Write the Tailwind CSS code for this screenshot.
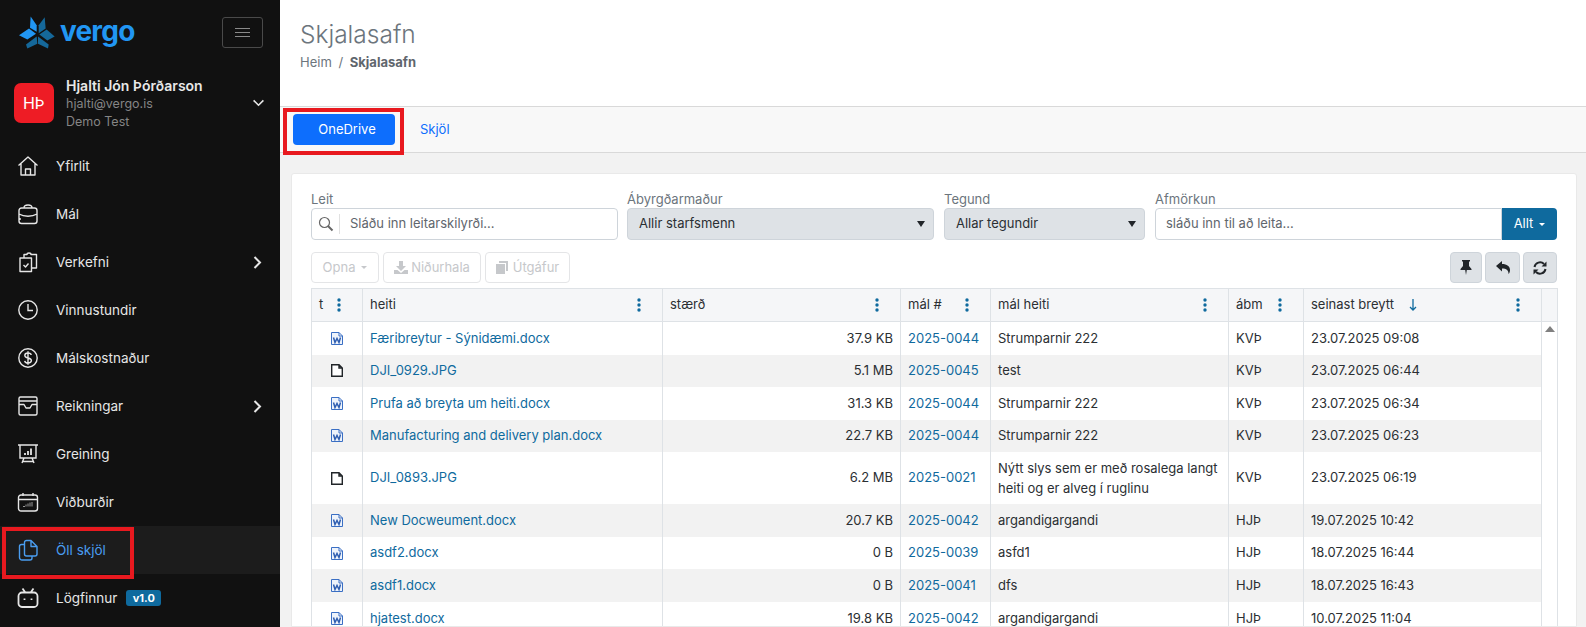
<!DOCTYPE html>
<html lang="is">
<head>
<meta charset="utf-8">
<title>Skjalasafn</title>
<script src="https://cdn.jsdelivr.net/npm/@tailwindcss/browser@4"></script>
</head>
<body class="font-['Inter',sans-serif] text-[13px] text-[#2b2f33] h-[627px] w-[1586px] overflow-hidden bg-[#f2f2f2]">
<div class="flex h-[627px] relative">
  <!-- Sidebar -->
  <aside class="w-[280px] shrink-0 bg-[#111111] text-[#e6e6e6] flex flex-col">
    <div class="h-[64px] flex items-center justify-between pl-[18px] pr-[17px]">
      <div class="flex items-center gap-[4px]">
        <svg width="38" height="35" viewBox="12 12 114 104">
          <path d="M50 16 L68 42 V62 L48 50 Z" fill="#2196f3"/>
          <path d="M15 72 L45 52 L66 68 L40 85 Z" fill="#2196f3"/>
          <path d="M92 18 L74 42 V66 L95 52 Z" fill="#15689a"/>
          <path d="M122 76 L98 55 L76 70 L100 88 Z" fill="#15689a"/>
          <path d="M36 100 L68 76 L70 98 L40 112 Z" fill="#15689a"/>
          <path d="M104 100 L72 76 V98 L102 112 Z" fill="#15689a"/>
        </svg>
        <span class="text-[28px] leading-none font-bold text-[#2196f3] tracking-[-0.8px] pb-[2px]">vergo</span>
      </div>
      <button class="w-[41px] h-[31px] border border-[#4a4a4a] rounded-[3px] flex flex-col items-center justify-center gap-[3px]">
        <span class="block w-[15px] h-[1px] bg-[#8a8a8a]"></span>
        <span class="block w-[15px] h-[1px] bg-[#8a8a8a]"></span>
        <span class="block w-[15px] h-[1px] bg-[#8a8a8a]"></span>
      </button>
    </div>
    <div class="h-[78px] flex items-center pl-[14px] pr-[15px]">
      <div class="w-[40px] h-[40px] rounded-[7px] bg-[#ee1c25] text-white text-[16px] flex items-center justify-center">HÞ</div>
      <div class="ml-[12px] flex-1 leading-[18px]">
        <div class="text-[14px] leading-[19px] font-semibold text-[#e8e8e8]">Hjalti Jón Þórðarson</div>
        <div class="text-[12.5px] text-[#858585]">hjalti@vergo.is</div>
        <div class="text-[12.5px] text-[#858585]">Demo Test</div>
      </div>
      <svg width="13" height="8" viewBox="0 0 14 9" fill="none" stroke="#e6e6e6" stroke-width="1.8"><path d="M1.5 1.5 L7 7 L12.5 1.5"/></svg>
    </div>
    <nav class="flex flex-col text-[13.5px]">
      <a class="h-[48px] flex items-center pl-[17px] pr-[18px]">
        <svg class="w-[22px] h-[22px]" viewBox="0 0 22 22" fill="none" stroke="#e6e6e6" stroke-width="1.4" stroke-linejoin="round"><path d="M1.5 10.5 L11 2 L20.5 10.5 M4 8.5 V20 H18 V8.5 M8.5 20 V14 H13.5 V20"/></svg>
        <span class="ml-[17px]">Yfirlit</span>
      </a>
      <a class="h-[48px] flex items-center pl-[17px] pr-[18px]">
        <svg class="w-[22px] h-[22px]" viewBox="0 0 22 22" fill="none" stroke="#e6e6e6" stroke-width="1.4" stroke-linejoin="round"><path d="M7 5 C7 2.5 8 2 11 2 C14 2 15 2.5 15 5 M4.5 5 H17.5 A2.5 2.5 0 0 1 20 7.5 V18 A2.5 2.5 0 0 1 17.5 20.5 H4.5 A2.5 2.5 0 0 1 2 18 V7.5 A2.5 2.5 0 0 1 4.5 5 Z M2 11 C7 14 15 14 20 11 M3 15 V17 M11 12.5 V13.5"/></svg>
        <span class="ml-[17px]">Mál</span>
      </a>
      <a class="h-[48px] flex items-center pl-[17px] pr-[18px]">
        <svg class="w-[22px] h-[22px]" viewBox="0 0 22 22" fill="none" stroke="#e6e6e6" stroke-width="1.4" stroke-linejoin="round"><path d="M3 7 H14.5 V20.5 H3 Z M7 7 V3.5 H10 C10 1.5 14 1.5 14 3.5 H19.5 V17 H14.5 M6.5 14 L8.5 16 L11.5 12.5"/></svg>
        <span class="ml-[17px] flex-1">Verkefni</span>
        <svg width="9" height="13" viewBox="0 0 9 13" fill="none" stroke="#e6e6e6" stroke-width="2"><path d="M1.5 1 L7 6.5 L1.5 12"/></svg>
      </a>
      <a class="h-[48px] flex items-center pl-[17px] pr-[18px]">
        <svg class="w-[22px] h-[22px]" viewBox="0 0 22 22" fill="none" stroke="#e6e6e6" stroke-width="1.4"><circle cx="11" cy="11" r="9.2"/><path d="M11 5 V11.5 H16"/></svg>
        <span class="ml-[17px]">Vinnustundir</span>
      </a>
      <a class="h-[48px] flex items-center pl-[17px] pr-[18px]">
        <svg class="w-[22px] h-[22px]" viewBox="0 0 22 22" fill="none" stroke="#e6e6e6" stroke-width="1.4"><circle cx="11" cy="11" r="9.2"/><path d="M14.2 8 C14 6.5 12.5 6 11 6 C9 6 7.8 7 7.8 8.4 C7.8 12 14.4 10 14.4 13.6 C14.4 15 13 16 11 16 C9.2 16 7.9 15.2 7.7 13.8 M11 4.2 V17.8"/></svg>
        <span class="ml-[17px]">Málskostnaður</span>
      </a>
      <a class="h-[48px] flex items-center pl-[17px] pr-[18px]">
        <svg class="w-[22px] h-[22px]" viewBox="0 0 22 22" fill="none" stroke="#e6e6e6" stroke-width="1.4" stroke-linejoin="round"><path d="M3.5 2 H18.5 A1.5 1.5 0 0 1 20 3.5 V18.5 A1.5 1.5 0 0 1 18.5 20 H3.5 A1.5 1.5 0 0 1 2 18.5 V3.5 A1.5 1.5 0 0 1 3.5 2 Z M2 6 H20 M2 9.5 H7 L9 13 H13 L15 9.5 H20"/></svg>
        <span class="ml-[17px] flex-1">Reikningar</span>
        <svg width="9" height="13" viewBox="0 0 9 13" fill="none" stroke="#e6e6e6" stroke-width="2"><path d="M1.5 1 L7 6.5 L1.5 12"/></svg>
      </a>
      <a class="h-[48px] flex items-center pl-[17px] pr-[18px]">
        <svg class="w-[22px] h-[22px]" viewBox="0 0 22 22" fill="none" stroke="#e6e6e6" stroke-width="1.4"><path d="M1 2 H21 M3 2 V15 H19 V2 M7 15 L5 20 M15 15 L17 20 M5 18.5 H17"/><path d="M8 12 V10 M11 12 V8 M14 12 V5.5" stroke-width="1.8"/></svg>
        <span class="ml-[17px]">Greining</span>
      </a>
      <a class="h-[48px] flex items-center pl-[17px] pr-[18px]">
        <svg class="w-[22px] h-[22px]" viewBox="0 0 22 22" fill="none" stroke="#e6e6e6" stroke-width="1.4" stroke-linejoin="round"><path d="M4 4 H18 A2.5 2.5 0 0 1 20.5 6.5 V17.5 A2.5 2.5 0 0 1 18 20 H4 A2.5 2.5 0 0 1 1.5 17.5 V6.5 A2.5 2.5 0 0 1 4 4 Z M1.5 8.5 H20.5 M6 2 V5 M16 2 V5"/><path d="M6 15.5 H8 M9 15.5 V13.5 M11 15.5 V12.5 M13 15.5 V11.5 M15 15.5 V11" stroke="#999" stroke-width="1"/></svg>
        <span class="ml-[17px]">Viðburðir</span>
      </a>
      <a class="h-[48px] flex items-center pl-[17px] pr-[18px] bg-[#1c1c1c] text-[#4a9df0]">
        <svg class="w-[22px] h-[22px]" viewBox="0 0 22 22" fill="none" stroke="#4a9df0" stroke-width="1.4" stroke-linejoin="round"><path d="M7.5 3.5 A2 2 0 0 1 9.5 1.5 H14 L20 7.5 V15 A2 2 0 0 1 18 17 H9.5 A2 2 0 0 1 7.5 15 Z M14 1.5 V7.5 H20 M7.5 5.5 H4.5 A2 2 0 0 0 2.5 7.5 V18.5 A2.5 2.5 0 0 0 5 21 H13 A2 2 0 0 0 15 19 V17"/></svg>
        <span class="ml-[17px]">Öll skjöl</span>
      </a>
      <a class="h-[48px] flex items-center pl-[17px] pr-[18px]">
        <svg class="w-[22px] h-[22px]" viewBox="0 0 22 22" fill="none" stroke="#e6e6e6" stroke-width="1.8" stroke-linejoin="round"><path d="M5 5.5 H17 A3.5 3.5 0 0 1 20.5 9 V16.5 A3.5 3.5 0 0 1 17 20 H5 A3.5 3.5 0 0 1 1.5 16.5 V9 A3.5 3.5 0 0 1 5 5.5 Z M8 5 L5.5 1.5 M14 5 L16.5 1.5 M7.5 11.5 V13 M14.5 11.5 V13"/></svg>
        <span class="ml-[17px]">Lögfinnur</span>
        <span class="ml-[9px] h-[16px] w-[35px] rounded-[3px] bg-[#0f6a9e] text-white text-[11px] font-bold flex items-center justify-center">v1.0</span>
      </a>
    </nav>
  </aside>

  <!-- Main -->
  <main class="flex-1 min-w-0 flex flex-col">
    <header class="h-[106px] shrink-0 bg-white pl-[20px] pt-[17px]">
      <h1 class="text-[24.5px] leading-[34px] font-light text-[#6c757d]">Skjalasafn</h1>
      <div class="mt-[1px] text-[13px] leading-[20px] text-[#6c757d]">Heim <span class="mx-[3px]">/</span> <span class="font-bold text-[#5f666d]">Skjalasafn</span></div>
    </header>
    <div class="h-[47px] shrink-0 bg-[#f8f8f8] border-y border-[#d9d9d9] flex items-center pl-[13px]">
      <button class="w-[102px] h-[31px] rounded-[4px] bg-[#0d6efd] text-white text-[13px] pl-[6px]">OneDrive</button>
      <a class="ml-[25px] text-[13px] text-[#0d6efd]">Skjöl</a>
    </div>
    <div class="flex-1 min-h-0 pl-[11px] pr-[9px] pt-[20px]">
      <section class="h-full bg-white border border-[#e9e9e9] rounded-t-[3px] px-[19px] pt-[15px] overflow-hidden">
        <!-- Filters -->
        <div class="flex">
          <label class="w-[307px] block">
            <span class="block text-[13px] leading-[19px] text-[#6c757d] pt-[1px] h-[19px]">Leit</span>
            <div class="h-[32px] border border-[#ced4da] rounded-[4px] flex items-center bg-white">
              <svg class="ml-[6px]" width="16" height="16" viewBox="0 0 16 16" fill="none" stroke="#666" stroke-width="1.2"><circle cx="6.5" cy="6.5" r="5"/><path d="M10 10 L14.5 14.5" stroke-width="2"/></svg>
              <span class="ml-[5px] w-[1px] h-[20px] bg-[#e1e1e1]"></span>
              <span class="ml-[10px] text-[#5f666d]">Sláðu inn leitarskilyrði...</span>
            </div>
          </label>
          <label class="ml-[9px] w-[307px] block">
            <span class="block text-[13px] leading-[19px] text-[#6c757d] pt-[1px] h-[19px]">Ábyrgðarmaður</span>
            <div class="h-[32px] border border-[#ced4da] rounded-[4px] flex items-center justify-between bg-[#dee2e6] px-[11px]">
              <span>Allir starfsmenn</span>
              <span class="w-0 h-0 border-x-[4px] border-x-transparent border-t-[6px] border-t-[#212529] mr-[-3px]"></span>
            </div>
          </label>
          <label class="ml-[10px] w-[201px] block">
            <span class="block text-[13px] leading-[19px] text-[#6c757d] pt-[1px] h-[19px]">Tegund</span>
            <div class="h-[32px] border border-[#ced4da] rounded-[4px] flex items-center justify-between bg-[#dee2e6] px-[11px]">
              <span>Allar tegundir</span>
              <span class="w-0 h-0 border-x-[4px] border-x-transparent border-t-[6px] border-t-[#212529] mr-[-3px]"></span>
            </div>
          </label>
          <label class="ml-[10px] w-[402px] block">
            <span class="block text-[13px] leading-[19px] text-[#6c757d] pt-[1px] h-[19px]">Afmörkun</span>
            <div class="h-[32px] flex">
              <div class="flex-1 border border-[#ced4da] rounded-l-[4px] flex items-center px-[10px] text-[#5f666d]">sláðu inn til að leita...</div>
              <div class="w-[55px] bg-[#0f6a9e] rounded-r-[4px] text-white flex items-center justify-center gap-[6px]">Allt <span class="w-0 h-0 border-x-[3px] border-x-transparent border-t-[3px] border-t-white"></span></div>
            </div>
          </label>
        </div>
        <!-- Toolbar -->
        <div class="mt-[12px] h-[31px] flex justify-between">
          <div class="flex gap-[4px] text-[#c6c8cb]">
            <div class="w-[68px] border border-[#e4e5e7] rounded-[4px] flex items-center justify-center gap-[6px]">Opna <span class="w-0 h-0 border-x-[3px] border-x-transparent border-t-[3px] border-t-[#c6c8cb]"></span></div>
            <div class="w-[98px] border border-[#e4e5e7] rounded-[4px] flex items-center justify-center gap-[3px]">
              <svg width="14" height="13" viewBox="0 0 14 13" fill="#c6c8cb"><path d="M5 0 H9 V5 H12 L7 10 L2 5 H5 Z M0 9 H3.5 L7 12 L10.5 9 H14 V13 H0 Z"/></svg>Niðurhala</div>
            <div class="w-[85px] border border-[#e4e5e7] rounded-[4px] flex items-center justify-center gap-[5px]">
              <svg width="12" height="13" viewBox="0 0 12 13" fill="#c6c8cb"><path d="M3 0 H12 V10 H10 V2 H3 Z M0 3 H9 V13 H0 Z"/></svg>Útgáfur</div>
          </div>
          <div class="flex gap-[3px]">
            <div class="w-[32px] bg-[#dee2e6] border border-[#ced4da] rounded-[4px] flex items-center justify-center">
              <svg width="12" height="15" viewBox="0 0 12 15" fill="#212529"><path d="M2 0 H10 V1.5 H9 V6 L11.5 9 V10 H6.8 L6 15 L5.2 10 H.5 V9 L3 6 V1.5 H2 Z"/></svg></div>
            <div class="w-[35px] bg-[#dee2e6] border border-[#ced4da] rounded-[4px] flex items-center justify-center">
              <svg width="14" height="13" viewBox="0 0 14 13" fill="#212529"><path d="M0 5 L6 0 V3 C11 3 14 5.5 14 9 C14 10.5 13.5 12 12.5 13 C12.8 9.5 10.5 7.5 6 7.5 V10.5 Z"/></svg></div>
            <div class="w-[34px] bg-[#dee2e6] border border-[#ced4da] rounded-[4px] flex items-center justify-center">
              <svg width="14" height="14" viewBox="0 0 14 14" fill="none" stroke="#212529" stroke-width="2"><path d="M1.5 6 A5.6 5.6 0 0 1 11 3 M12.5 8 A5.6 5.6 0 0 1 3 11"/><path d="M13.5 0.5 V5.5 H8.5 Z M0.5 13.5 V8.5 H5.5 Z" fill="#212529" stroke="none"/></svg></div>
          </div>
        </div>
        <!-- Table -->
        <table class="mt-[5px] w-[1246px] table-fixed border-collapse border border-[#dee2e6]">
          <colgroup><col class="w-[51px]"><col class="w-[300px]"><col class="w-[238px]"><col class="w-[90px]"><col class="w-[238px]"><col class="w-[75px]"><col class="w-[238px]"><col class="w-[16px]"></colgroup>
          <thead class="bg-[#f5f6f8]">
            <tr class="h-[33px] border-b border-[#dee2e6]">
              <th class="border-r border-[#dee2e6] font-normal text-left pl-[7px]"><div class="flex items-center justify-between pr-[21px]">t<svg width="4" height="14" viewBox="0 0 4 14" fill="#0f6a9e"><circle cx="2" cy="2" r="1.7"/><circle cx="2" cy="7" r="1.7"/><circle cx="2" cy="12" r="1.7"/></svg></div></th>
              <th class="border-r border-[#dee2e6] font-normal text-left pl-[7px]"><div class="flex items-center justify-between pr-[21px]">heiti<svg width="4" height="14" viewBox="0 0 4 14" fill="#0f6a9e"><circle cx="2" cy="2" r="1.7"/><circle cx="2" cy="7" r="1.7"/><circle cx="2" cy="12" r="1.7"/></svg></div></th>
              <th class="border-r border-[#dee2e6] font-normal text-left pl-[7px]"><div class="flex items-center justify-between pr-[21px]">stærð<svg width="4" height="14" viewBox="0 0 4 14" fill="#0f6a9e"><circle cx="2" cy="2" r="1.7"/><circle cx="2" cy="7" r="1.7"/><circle cx="2" cy="12" r="1.7"/></svg></div></th>
              <th class="border-r border-[#dee2e6] font-normal text-left pl-[7px]"><div class="flex items-center justify-between pr-[21px]">mál #<svg width="4" height="14" viewBox="0 0 4 14" fill="#0f6a9e"><circle cx="2" cy="2" r="1.7"/><circle cx="2" cy="7" r="1.7"/><circle cx="2" cy="12" r="1.7"/></svg></div></th>
              <th class="border-r border-[#dee2e6] font-normal text-left pl-[7px]"><div class="flex items-center justify-between pr-[21px]">mál heiti<svg width="4" height="14" viewBox="0 0 4 14" fill="#0f6a9e"><circle cx="2" cy="2" r="1.7"/><circle cx="2" cy="7" r="1.7"/><circle cx="2" cy="12" r="1.7"/></svg></div></th>
              <th class="border-r border-[#dee2e6] font-normal text-left pl-[7px]"><div class="flex items-center justify-between pr-[21px]">ábm<svg width="4" height="14" viewBox="0 0 4 14" fill="#0f6a9e"><circle cx="2" cy="2" r="1.7"/><circle cx="2" cy="7" r="1.7"/><circle cx="2" cy="12" r="1.7"/></svg></div></th>
              <th class="border-r border-[#dee2e6] font-normal text-left pl-[7px]"><div class="flex items-center pr-[21px]"><span>seinast breytt</span><svg class="ml-[15px]" width="8" height="12" viewBox="0 0 8 12" fill="none" stroke="#0f6a9e" stroke-width="1.3"><path d="M4 0 V11 M1 8 L4 11 L7 8"/></svg><svg class="ml-auto" width="4" height="14" viewBox="0 0 4 14" fill="#0f6a9e"><circle cx="2" cy="2" r="1.7"/><circle cx="2" cy="7" r="1.7"/><circle cx="2" cy="12" r="1.7"/></svg></div></th>
              <th></th>
            </tr>
          </thead>
          <tbody>
            <tr class="h-[33px]">
              <td class="border-r border-[#dee2e6]"><svg class="block mx-auto" width="12" height="13" viewBox="0 0 12 13" fill="#eef3fb" stroke="#3a6fc4"><path d="M.5 .5 H8 L11.5 4 V12.5 H.5 Z M8 .5 V4 H11.5"/><path d="M2.5 5.5 L4 10.5 L6 6.5 L8 10.5 L9.5 5.5" fill="none" stroke="#2f5eb0" stroke-width="1.5"/></svg></td>
              <td class="border-r border-[#dee2e6] pl-[7px] text-[#0f6a9e]">Færibreytur - Sýnidæmi.docx</td>
              <td class="border-r border-[#dee2e6] pr-[7px] text-right">37.9 KB</td>
              <td class="border-r border-[#dee2e6] pl-[7px] text-[#0f6a9e]">2025-0044</td>
              <td class="border-r border-[#dee2e6] pl-[7px]">Strumparnir 222</td>
              <td class="border-r border-[#dee2e6] pl-[7px]">KVÞ</td>
              <td class="border-r border-[#dee2e6] pl-[7px]">23.07.2025 09:08</td>
              <td class="align-top bg-white" rowspan="9"><div class="mx-auto mt-[4px] w-0 h-0 border-x-[5px] border-x-transparent border-b-[6px] border-b-[#808080]"></div></td>
            </tr>
            <tr class="h-[32.5px] bg-[#f2f2f2]">
              <td class="border-r border-[#dee2e6]"><svg class="block mx-auto" width="12" height="13" viewBox="0 0 12 13" fill="#fff" stroke="#212529"><path d="M.7 .7 H8 L11.3 4 V12.3 H.7 Z M8 .7 V4 H11.3" stroke-width="1.4"/></svg></td>
              <td class="border-r border-[#dee2e6] pl-[7px] text-[#0f6a9e]">DJI_0929.JPG</td>
              <td class="border-r border-[#dee2e6] pr-[7px] text-right">5.1 MB</td>
              <td class="border-r border-[#dee2e6] pl-[7px] text-[#0f6a9e]">2025-0045</td>
              <td class="border-r border-[#dee2e6] pl-[7px]">test</td>
              <td class="border-r border-[#dee2e6] pl-[7px]">KVÞ</td>
              <td class="border-r border-[#dee2e6] pl-[7px]">23.07.2025 06:44</td>
            </tr>
            <tr class="h-[32.5px]">
              <td class="border-r border-[#dee2e6]"><svg class="block mx-auto" width="12" height="13" viewBox="0 0 12 13" fill="#eef3fb" stroke="#3a6fc4"><path d="M.5 .5 H8 L11.5 4 V12.5 H.5 Z M8 .5 V4 H11.5"/><path d="M2.5 5.5 L4 10.5 L6 6.5 L8 10.5 L9.5 5.5" fill="none" stroke="#2f5eb0" stroke-width="1.5"/></svg></td>
              <td class="border-r border-[#dee2e6] pl-[7px] text-[#0f6a9e]">Prufa að breyta um heiti.docx</td>
              <td class="border-r border-[#dee2e6] pr-[7px] text-right">31.3 KB</td>
              <td class="border-r border-[#dee2e6] pl-[7px] text-[#0f6a9e]">2025-0044</td>
              <td class="border-r border-[#dee2e6] pl-[7px]">Strumparnir 222</td>
              <td class="border-r border-[#dee2e6] pl-[7px]">KVÞ</td>
              <td class="border-r border-[#dee2e6] pl-[7px]">23.07.2025 06:34</td>
            </tr>
            <tr class="h-[32.5px] bg-[#f2f2f2]">
              <td class="border-r border-[#dee2e6]"><svg class="block mx-auto" width="12" height="13" viewBox="0 0 12 13" fill="#eef3fb" stroke="#3a6fc4"><path d="M.5 .5 H8 L11.5 4 V12.5 H.5 Z M8 .5 V4 H11.5"/><path d="M2.5 5.5 L4 10.5 L6 6.5 L8 10.5 L9.5 5.5" fill="none" stroke="#2f5eb0" stroke-width="1.5"/></svg></td>
              <td class="border-r border-[#dee2e6] pl-[7px] text-[#0f6a9e]">Manufacturing and delivery plan.docx</td>
              <td class="border-r border-[#dee2e6] pr-[7px] text-right">22.7 KB</td>
              <td class="border-r border-[#dee2e6] pl-[7px] text-[#0f6a9e]">2025-0044</td>
              <td class="border-r border-[#dee2e6] pl-[7px]">Strumparnir 222</td>
              <td class="border-r border-[#dee2e6] pl-[7px]">KVÞ</td>
              <td class="border-r border-[#dee2e6] pl-[7px]">23.07.2025 06:23</td>
            </tr>
            <tr class="h-[52px]">
              <td class="border-r border-[#dee2e6]"><svg class="block mx-auto" width="12" height="13" viewBox="0 0 12 13" fill="#fff" stroke="#212529"><path d="M.7 .7 H8 L11.3 4 V12.3 H.7 Z M8 .7 V4 H11.3" stroke-width="1.4"/></svg></td>
              <td class="border-r border-[#dee2e6] pl-[7px] text-[#0f6a9e]">DJI_0893.JPG</td>
              <td class="border-r border-[#dee2e6] pr-[7px] text-right">6.2 MB</td>
              <td class="border-r border-[#dee2e6] pl-[7px] text-[#0f6a9e]">2025-0021</td>
              <td class="border-r border-[#dee2e6] pl-[7px] leading-[20px]">Nýtt slys sem er með rosalega langt heiti og er alveg í ruglinu</td>
              <td class="border-r border-[#dee2e6] pl-[7px]">KVÞ</td>
              <td class="border-r border-[#dee2e6] pl-[7px]">23.07.2025 06:19</td>
            </tr>
            <tr class="h-[33px] bg-[#f2f2f2]">
              <td class="border-r border-[#dee2e6]"><svg class="block mx-auto" width="12" height="13" viewBox="0 0 12 13" fill="#eef3fb" stroke="#3a6fc4"><path d="M.5 .5 H8 L11.5 4 V12.5 H.5 Z M8 .5 V4 H11.5"/><path d="M2.5 5.5 L4 10.5 L6 6.5 L8 10.5 L9.5 5.5" fill="none" stroke="#2f5eb0" stroke-width="1.5"/></svg></td>
              <td class="border-r border-[#dee2e6] pl-[7px] text-[#0f6a9e]">New Docweument.docx</td>
              <td class="border-r border-[#dee2e6] pr-[7px] text-right">20.7 KB</td>
              <td class="border-r border-[#dee2e6] pl-[7px] text-[#0f6a9e]">2025-0042</td>
              <td class="border-r border-[#dee2e6] pl-[7px]">argandigargandi</td>
              <td class="border-r border-[#dee2e6] pl-[7px]">HJÞ</td>
              <td class="border-r border-[#dee2e6] pl-[7px]">19.07.2025 10:42</td>
            </tr>
            <tr class="h-[32px]">
              <td class="border-r border-[#dee2e6]"><svg class="block mx-auto" width="12" height="13" viewBox="0 0 12 13" fill="#eef3fb" stroke="#3a6fc4"><path d="M.5 .5 H8 L11.5 4 V12.5 H.5 Z M8 .5 V4 H11.5"/><path d="M2.5 5.5 L4 10.5 L6 6.5 L8 10.5 L9.5 5.5" fill="none" stroke="#2f5eb0" stroke-width="1.5"/></svg></td>
              <td class="border-r border-[#dee2e6] pl-[7px] text-[#0f6a9e]">asdf2.docx</td>
              <td class="border-r border-[#dee2e6] pr-[7px] text-right">0 B</td>
              <td class="border-r border-[#dee2e6] pl-[7px] text-[#0f6a9e]">2025-0039</td>
              <td class="border-r border-[#dee2e6] pl-[7px]">asfd1</td>
              <td class="border-r border-[#dee2e6] pl-[7px]">HJÞ</td>
              <td class="border-r border-[#dee2e6] pl-[7px]">18.07.2025 16:44</td>
            </tr>
            <tr class="h-[33px] bg-[#f2f2f2]">
              <td class="border-r border-[#dee2e6]"><svg class="block mx-auto" width="12" height="13" viewBox="0 0 12 13" fill="#eef3fb" stroke="#3a6fc4"><path d="M.5 .5 H8 L11.5 4 V12.5 H.5 Z M8 .5 V4 H11.5"/><path d="M2.5 5.5 L4 10.5 L6 6.5 L8 10.5 L9.5 5.5" fill="none" stroke="#2f5eb0" stroke-width="1.5"/></svg></td>
              <td class="border-r border-[#dee2e6] pl-[7px] text-[#0f6a9e]">asdf1.docx</td>
              <td class="border-r border-[#dee2e6] pr-[7px] text-right">0 B</td>
              <td class="border-r border-[#dee2e6] pl-[7px] text-[#0f6a9e]">2025-0041</td>
              <td class="border-r border-[#dee2e6] pl-[7px]">dfs</td>
              <td class="border-r border-[#dee2e6] pl-[7px]">HJÞ</td>
              <td class="border-r border-[#dee2e6] pl-[7px]">18.07.2025 16:43</td>
            </tr>
            <tr class="h-[33px]">
              <td class="border-r border-[#dee2e6]"><svg class="block mx-auto" width="12" height="13" viewBox="0 0 12 13" fill="#eef3fb" stroke="#3a6fc4"><path d="M.5 .5 H8 L11.5 4 V12.5 H.5 Z M8 .5 V4 H11.5"/><path d="M2.5 5.5 L4 10.5 L6 6.5 L8 10.5 L9.5 5.5" fill="none" stroke="#2f5eb0" stroke-width="1.5"/></svg></td>
              <td class="border-r border-[#dee2e6] pl-[7px] text-[#0f6a9e]">hjatest.docx</td>
              <td class="border-r border-[#dee2e6] pr-[7px] text-right">19.8 KB</td>
              <td class="border-r border-[#dee2e6] pl-[7px] text-[#0f6a9e]">2025-0042</td>
              <td class="border-r border-[#dee2e6] pl-[7px]">argandigargandi</td>
              <td class="border-r border-[#dee2e6] pl-[7px]">HJÞ</td>
              <td class="border-r border-[#dee2e6] pl-[7px]">10.07.2025 11:04</td>
            </tr>
          </tbody>
        </table>
      </section>
    </div>
  </main>
  <!-- Red annotation boxes -->
  <div class="absolute left-[2px] top-[527px] w-[132px] h-[52px] border-4 border-[#e8191f] pointer-events-none"></div>
  <div class="absolute left-[283px] top-[108px] w-[121px] h-[47px] border-4 border-[#e8191f] pointer-events-none"></div>
</div>
</body>
</html>
